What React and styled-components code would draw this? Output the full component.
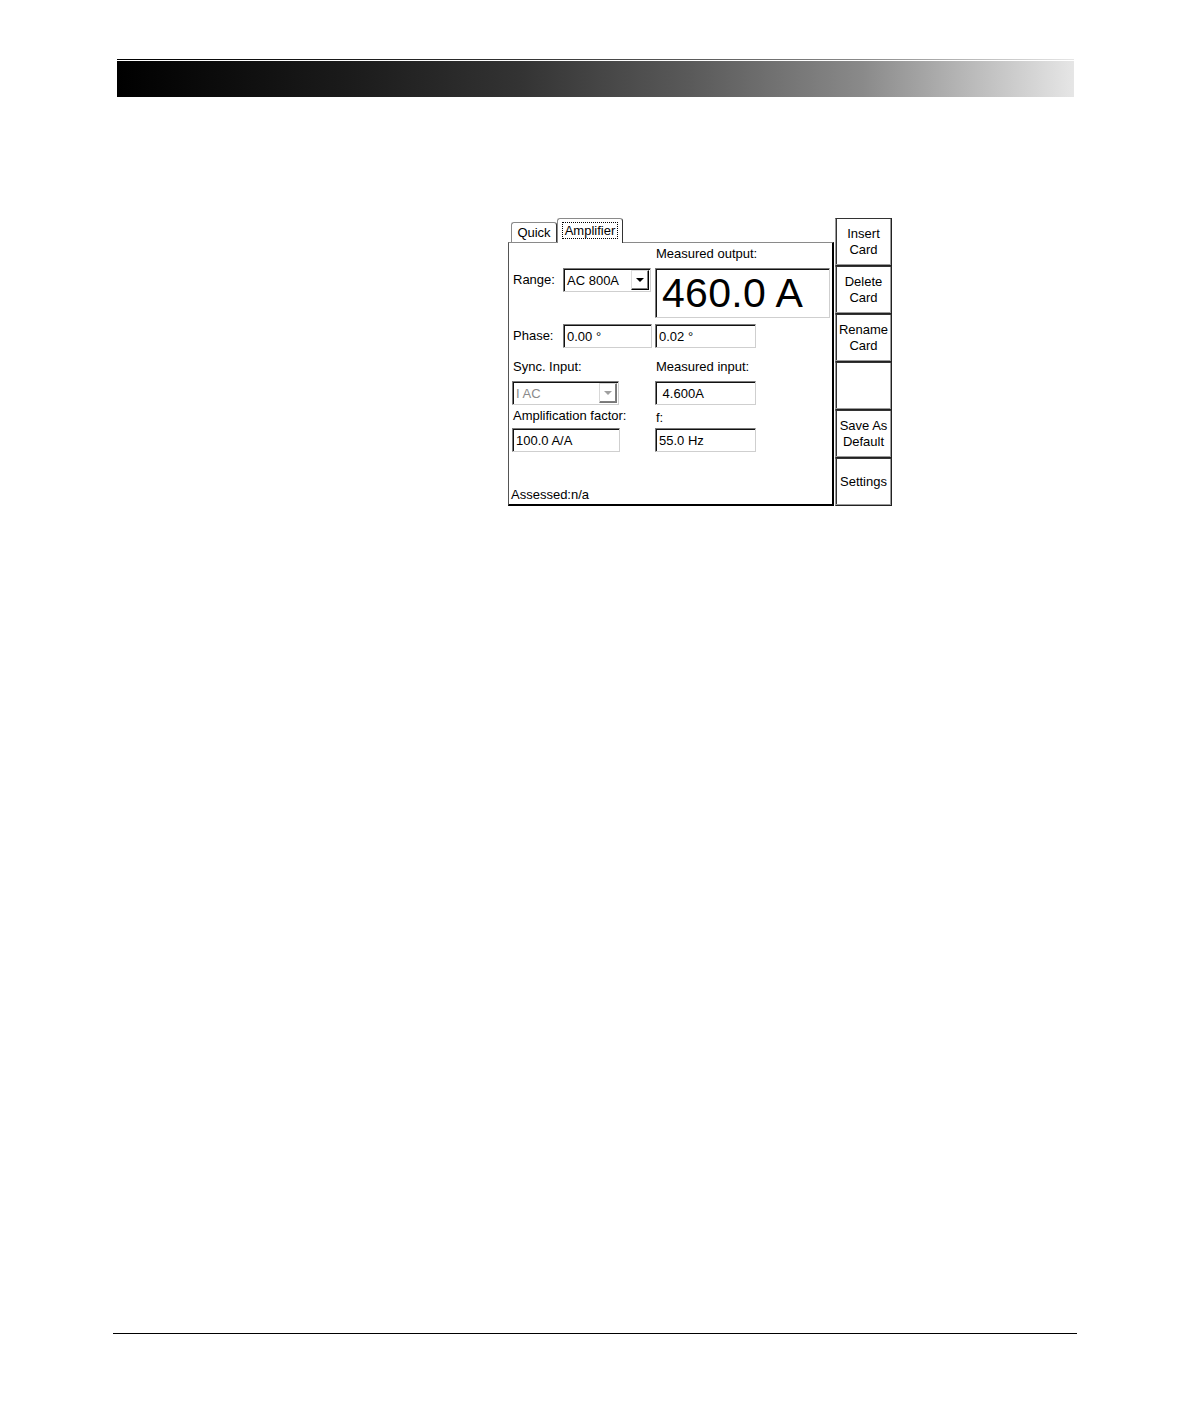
import styled, { createGlobalStyle } from 'styled-components'

const GlobalStyle = createGlobalStyle`
  body {
    margin: 0;
    background: #fff;
    font-family: "Liberation Sans", Arial, sans-serif;
  }
`

const Page = styled.div`
  width: 1190px;
  height: 1418px;
  display: flex;
  flex-direction: column;
  background: #fff;
`

const headGradient = 'linear-gradient(to right, #000 0%, #1c1c1c 25%, #333 42%, #5a5a5a 60%, #8a8a8a 78%, #bdbdbd 90%, #e6e6e6 100%)'

const HeaderRule = styled.div`
  margin: 59px 116px 0 117px;
  height: 1px;
  background: ${headGradient};
`

const HeaderBar = styled.div`
  margin: 1px 116px 0 117px;
  height: 36px;
  background: ${headGradient};
`

const Screen = styled.div`
  margin: 121px 0 0 508px;
  display: flex;
  align-items: flex-start;
  font-size: 12px;
  color: #000;
`

const LeftPane = styled.div`
  width: 326px;
  display: flex;
  flex-direction: column;
`

const TabRow = styled.div`
  height: 24px;
  display: flex;
  align-items: flex-end;
  padding-left: 3px;
  position: relative;
  z-index: 1;
`

const Tab = styled.div`
  box-sizing: border-box;
  width: ${p => p.$width}px;
  height: ${p => (p.$active ? 25 : 20)}px;
  margin-bottom: ${p => (p.$active ? -1 : 0)}px;
  border: 1px solid #8a8a8a;
  border-right-color: #333;
  border-bottom: none;
  border-radius: 3px 3px 0 0;
  background: #fff;
  display: flex;
  align-items: center;
  justify-content: center;
  padding-bottom: ${p => (p.$active ? 1 : 0)}px;
  font-size: 13px;
`

const FocusText = styled.span`
  border: 1px dotted #000;
  padding: 0 2px;
  line-height: 15px;
`

const Panel = styled.div`
  box-sizing: border-box;
  height: 264px;
  border: 1px solid #000;
  border-top-color: #8a8a8a;
  border-left-color: #555;
  border-right-width: 2px;
  border-bottom-width: 2px;
  padding: 3px 0 0 3px;
  display: flex;
  flex-direction: column;
`

const Row = styled.div`
  display: grid;
  grid-template-columns: 143px 1fr;
  align-items: start;
  height: ${p => (p.$height ? `${p.$height}px` : 'auto')};
  margin-top: ${p => p.$gap || 0}px;
`

const Cell = styled.div`
  display: flex;
  align-items: center;
`

const Label = styled.span`
  display: block;
  width: ${p => (p.$width ? `${p.$width}px` : 'auto')};
  padding-left: 1px;
  padding-top: ${p => p.$drop || 0}px;
  font-size: 13px;
  line-height: 16px;
  white-space: nowrap;
`

const Field = styled.div`
  box-sizing: border-box;
  width: ${p => p.$width}px;
  height: ${p => p.$height || 24}px;
  border: 1px solid;
  border-color: #7a7a7a #cfcfcf #cfcfcf #7a7a7a;
  box-shadow: inset 1px 1px 0 #111;
  display: flex;
  align-items: center;
  justify-content: space-between;
  padding-left: 3px;
  color: ${p => (p.$disabled ? '#8a8a8a' : '#000')};
  font-size: 13px;
  white-space: pre;
`

const BigValue = styled.span`
  font-size: 41px;
  line-height: 46px;
  padding-left: 3px;
  letter-spacing: 0.3px;
`

const ArrowButton = styled.div`
  box-sizing: border-box;
  width: 18px;
  height: 20px;
  margin: 1px 1px 0 0;
  align-self: flex-start;
  border: 1px solid;
  border-color: ${p => (p.$disabled ? '#d8d8d8 #777 #777 #d8d8d8' : '#dcdcdc #000 #000 #dcdcdc')};
  box-shadow: inset -1px -1px 0 #808080, inset 1px 1px 0 #fff;
  display: flex;
  align-items: center;
  justify-content: center;

  &::after {
    content: '';
    border-left: 4px solid transparent;
    border-right: 4px solid transparent;
    border-top: 4px solid ${p => (p.$disabled ? '#a0a0a0' : '#000')};
  }
`

const Assessed = styled.div`
  margin-top: 35px;
  margin-left: -1px;
  font-size: 13px;
  line-height: 16px;
`

const ButtonColumn = styled.div`
  margin-left: 1px;
  width: 57px;
  display: flex;
  flex-direction: column;
`

const SoftKey = styled.div`
  box-sizing: border-box;
  height: 48px;
  border: 1px solid #222;
  border-left-color: #9a9a9a;
  border-top-color: #333;
  box-shadow: inset -1px -1px 0 #9a9a9a, inset 1px 0 0 #333;
  background: #fff;
  display: flex;
  align-items: center;
  justify-content: center;
  text-align: center;
  font-size: 13px;
  line-height: 16px;
  white-space: pre;
`

const FooterRule = styled.div`
  margin: auto 113px 84px 113px;
  height: 1px;
  background: #000;
`

const softKeys = ['Insert\nCard', 'Delete\nCard', 'Rename\nCard', '', 'Save As\nDefault', 'Settings']

const Dropdown = ({ width, value, disabled }) => (
  <Field $width={width} $disabled={disabled}>
    {value}
    <ArrowButton $disabled={disabled} />
  </Field>
)

const App = () => {
  return (
    <Page>
      <GlobalStyle />
      <HeaderRule />
      <HeaderBar />
      <Screen>
        <LeftPane>
          <TabRow>
            <Tab $width={46}>Quick</Tab>
            <Tab $width={66} $active>
              <FocusText>Amplifier</FocusText>
            </Tab>
          </TabRow>
          <Panel>
            <Row $height={16}>
              <div />
              <Label>Measured output:</Label>
            </Row>
            <Row $gap={6}>
              <Cell>
                <Label $width={50}>Range:</Label>
                <Dropdown width={88} value="AC 800A" />
              </Cell>
              <Field $width={175} $height={50}>
                <BigValue>460.0 A</BigValue>
              </Field>
            </Row>
            <Row $gap={6}>
              <Cell>
                <Label $width={50}>Phase:</Label>
                <Field $width={89}>0.00 °</Field>
              </Cell>
              <Field $width={101}>0.02 °</Field>
            </Row>
            <Row $gap={11} $height={16}>
              <Label>Sync. Input:</Label>
              <Label>Measured input:</Label>
            </Row>
            <Row $gap={6}>
              <Dropdown width={107} value="I AC" disabled />
              <Field $width={101}> 4.600A</Field>
            </Row>
            <Row $gap={3} $height={16}>
              <Label>Amplification factor:</Label>
              <Label $drop={2}>f:</Label>
            </Row>
            <Row $gap={4}>
              <Field $width={108}>100.0 A/A</Field>
              <Field $width={101}>55.0 Hz</Field>
            </Row>
            <Assessed>Assessed:n/a</Assessed>
          </Panel>
        </LeftPane>
        <ButtonColumn>
          {softKeys.map((k, i) => (
            <SoftKey key={i}>{k}</SoftKey>
          ))}
        </ButtonColumn>
      </Screen>
      <FooterRule />
    </Page>
  )
}

export default App
